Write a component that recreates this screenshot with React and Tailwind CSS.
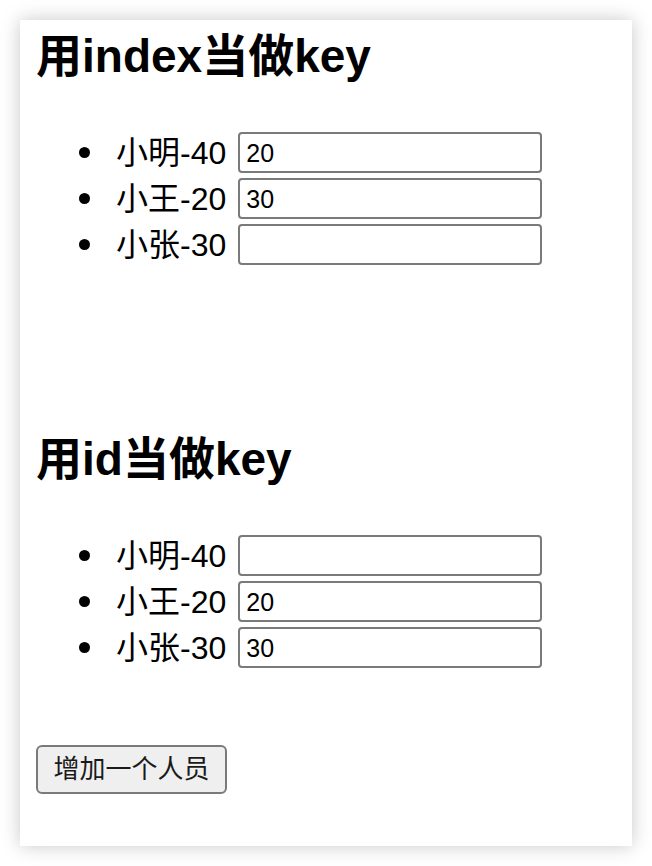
import React, { useState } from "react";

const font = "font-['Liberation_Sans','Noto_Sans_CJK_SC',sans-serif]";

const PersonList = ({ people }) => (
  <ul className="pl-[80px] text-[32px] leading-[46px] text-black">
    {people.map((p) => (
      <li key={p.name} className="h-[46px]">
        <span className="-ml-[37px] mr-[26px] inline-block h-[11px] w-[11px] rounded-full bg-black align-middle" />
        <span className="align-middle">
          {p.name}-{p.age}
        </span>
        <input
          defaultValue={p.value}
          className="ml-[12px] inline-block h-[41px] w-[304px] rounded-[4px] border-2 border-[#7a7a7a] bg-white px-[6px] align-middle text-[25px] text-black outline-none"
        />
      </li>
    ))}
  </ul>
);

export default function App() {
  const [byIndex] = useState([
    { name: "小明", age: 40, value: "20" },
    { name: "小王", age: 20, value: "30" },
    { name: "小张", age: 30, value: "" },
  ]);
  const [byId] = useState([
    { name: "小明", age: 40, value: "" },
    { name: "小王", age: 20, value: "20" },
    { name: "小张", age: 30, value: "30" },
  ]);

  return (
    <div className={`h-[866px] w-[652px] bg-white p-[20px] ${font}`}>
      <div className="h-[826px] w-[612px] bg-white px-[16px] pt-[8px] shadow-[0_0_18px_rgba(0,0,0,0.22)]">
        <h2 className="text-[46px] font-bold leading-[56px] text-black">用index当做key</h2>
        <div className="mt-[43px]">
          <PersonList people={byIndex} />
        </div>

        <h2 className="mt-[166px] text-[46px] font-bold leading-[56px] text-black">用id当做key</h2>
        <div className="mt-[43px]">
          <PersonList people={byId} />
        </div>

        <button className="mt-[77px] h-[49px] w-[191px] rounded-[6px] border-2 border-[#7a7a7a] bg-[#efefef] text-[26px] text-[#1a1a1a]">
          增加一个人员
        </button>
      </div>
    </div>
  );
}
